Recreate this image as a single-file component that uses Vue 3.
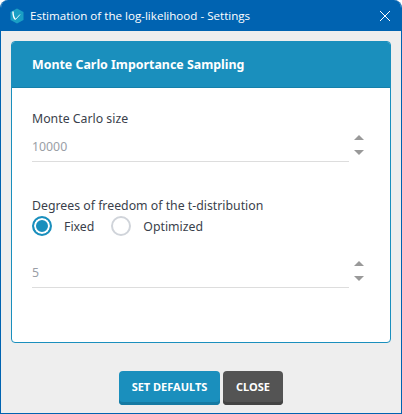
<template>
  <div class="window">
    <header class="titlebar">
      <svg class="logo" viewBox="0 0 16 16" width="16" height="16">
        <path d="M8 .5 14.500 4v8L8 15.500 1.500 12V4z" fill="#1a9fc4" />
        <path d="M4 3.500C4 7 4.500 10 6.500 11.500" fill="none" stroke="#fff" stroke-width="1.400" />
        <path d="M6.500 11.500 11 6.500" fill="none" stroke="#d8f3fa" stroke-width="1" />
      </svg>
      <span class="title">Estimation of the log-likelihood - Settings</span>
      <svg class="close-x" viewBox="0 0 12 12" width="12" height="12">
        <path d="M1 1 11 11M11 1 1 11" stroke="#fff" stroke-width="1" fill="none" />
      </svg>
    </header>
    <main class="body">
      <section class="panel">
        <h2 class="panel-head">Monte Carlo Importance Sampling</h2>
        <div class="panel-body">
          <div class="label first">Monte Carlo size</div>
          <div class="number">
            <div class="value">10000</div>
            <div class="spin"><i class="up"></i><i class="down"></i></div>
          </div>
          <div class="label second">Degrees of freedom of the t-distribution</div>
          <div class="radios">
            <span class="radio on"></span><span class="radio-text">Fixed</span>
            <span class="radio"></span><span class="radio-text">Optimized</span>
          </div>
          <div class="number third">
            <div class="value">5</div>
            <div class="spin"><i class="up"></i><i class="down"></i></div>
          </div>
        </div>
      </section>
      <footer class="actions">
        <button class="btn primary">SET DEFAULTS</button>
        <button class="btn dark">CLOSE</button>
      </footer>
    </main>
  </div>
</template>

<script setup>
</script>

<style>
html, body { margin: 0; background: #fff; }
</style>

<style scoped>
.window {
  width: 402px;
  height: 414px;
  box-sizing: border-box;
  display: flex;
  flex-direction: column;
  border-radius: 8px 8px 0 0;
  overflow: hidden;
  border: 1px solid #0063b1;
  border-top: 0;
  background: #eee;
  font-family: "Noto Sans", "Open Sans", sans-serif;
  color: #3a3f4b;
}
.titlebar {
  height: 31px;
  flex: none;
  background: #0063b1;
  color: #fff;
  display: flex;
  align-items: center;
  padding: 0 10px 0 8px;
}
.logo { flex: none; margin-right: 5px; }
.title { flex: 1; font-size: 11.6px; font-family: "Open Sans", sans-serif; white-space: nowrap; }
.close-x { flex: none; }
.body { flex: 1; display: flex; flex-direction: column; padding: 10px 10px 8px; }
.panel {
  height: 302px;
  box-sizing: border-box;
  border: 1px solid #1a8fbd;
  border-radius: 4px;
  background: #fff;
  overflow: hidden;
}
.panel-head {
  margin: 0;
  height: 46px;
  box-sizing: border-box;
  background: #1a8fbd;
  border-bottom: 1px solid #1580aa;
  color: #fff;
  font-size: 12.4px;
  font-weight: 700;
  line-height: 45px;
  padding-left: 20px;
}
.panel-body { padding: 0 20px; }
.label { font-size: 12.3px; line-height: 18px; }
.first { margin-top: 22px; }
.second { margin-top: 35px; }
.number { position: relative; width: 317px; }
.value {
  font-size: 12.3px;
  line-height: 18px;
  color: #9a9ea6;
  padding: 10px 0 5px;
  border-bottom: 1px solid #ddd;
}
.third { margin-top: 18px; }
.spin {
  position: absolute;
  left: 322px;
  top: 7px;
  display: flex;
  flex-direction: column;
  gap: 10px;
}
.spin i { display: block; width: 0; height: 0; border-left: 5px solid transparent; border-right: 5px solid transparent; }
.spin .up { border-bottom: 5.5px solid #999; }
.spin .down { border-top: 5.5px solid #999; }
.radios { display: flex; align-items: center; height: 20px; margin-top: 1px; font-size: 12.3px; }
.radio {
  width: 20px;
  height: 20px;
  box-sizing: border-box;
  border-radius: 50%;
  border: 2px solid #d0d4da;
  background: #fff;
}
.radio.on {
  border-color: #1a8fbd;
  background: #1a8fbd;
  box-shadow: inset 0 0 0 2px #fff;
}
.radio-text { margin: 0 17px 0 12px; }
.actions { display: flex; justify-content: center; gap: 3px; margin-top: 28px; }
.btn {
  height: 34px;
  border: 0;
  border-radius: 4px;
  color: #fff;
  font-family: "Noto Sans", sans-serif;
  font-size: 11px;
  font-weight: 700;
  padding: 0 0 3px;
}
.primary { width: 101px; background: #1a8fbd; box-shadow: inset 0 -3px 0 #157aa3; }
.dark { width: 60px; background: #545454; box-shadow: inset 0 -3px 0 #444; }
</style>
